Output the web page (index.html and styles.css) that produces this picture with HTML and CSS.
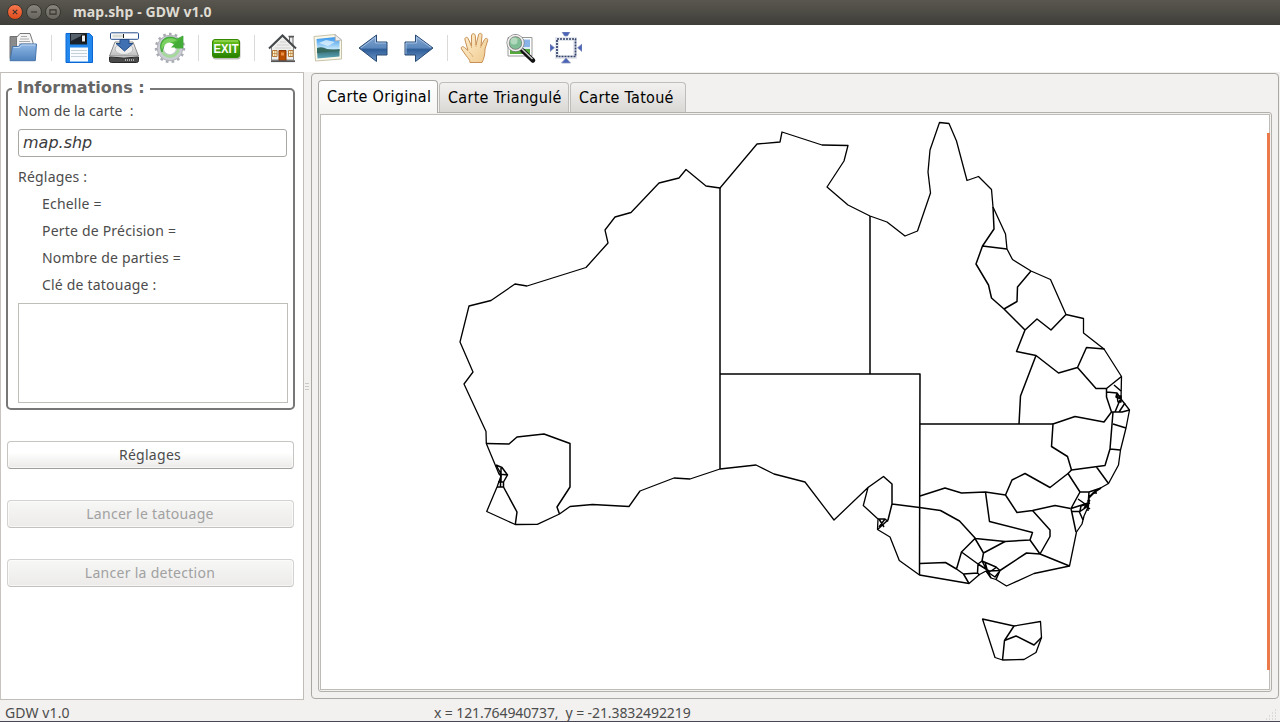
FILE: index.html
```html
<!DOCTYPE html>
<html lang="fr">
<head>
<meta charset="utf-8">
<title>map.shp - GDW v1.0</title>
<link rel="stylesheet" href="styles.css">
</head>
<body>
<svg class="defs" width="0" height="0" aria-hidden="true">
  <defs>
    <linearGradient id="blue" x1="0" y1="0" x2="0" y2="1"><stop offset="0" stop-color="#8fb8e6"/><stop offset="1" stop-color="#4f83bd"/></linearGradient>
    <linearGradient id="arrow" x1="0" y1="0" x2="0" y2="1"><stop offset="0" stop-color="#86a9d2"/><stop offset=".48" stop-color="#5c88bd"/><stop offset=".55" stop-color="#2f5d97"/><stop offset="1" stop-color="#6d98ca"/></linearGradient>
    <linearGradient id="green" x1="0" y1="0" x2="0" y2="1"><stop offset="0" stop-color="#6cc61e"/><stop offset="1" stop-color="#258000"/></linearGradient>
    <linearGradient id="metal" x1="0" y1="0" x2="0" y2="1"><stop offset="0" stop-color="#fafafa"/><stop offset="1" stop-color="#bcbcbc"/></linearGradient>
    <linearGradient id="skin" x1="0" y1="0" x2="1" y2="1"><stop offset="0" stop-color="#fff2d4"/><stop offset="1" stop-color="#efc98d"/></linearGradient>
    <linearGradient id="sky" x1="0" y1="0" x2="0" y2="1"><stop offset="0" stop-color="#3292ea"/><stop offset=".55" stop-color="#c3e6fa"/><stop offset=".6" stop-color="#356a70"/><stop offset="1" stop-color="#5ba7bb"/></linearGradient>
  </defs>
</svg>
<div class="window">
  <header class="titlebar">
    <span class="win-btn close"><svg viewBox="0 0 16 16"><path d="M5.500 5.500l5 5m0-5l-5 5"/></svg></span>
    <span class="win-btn"><svg viewBox="0 0 16 16"><path d="M4.500 8h7"/></svg></span>
    <span class="win-btn"><svg viewBox="0 0 16 16"><path d="M4.500 5.500h7v5h-7z"/></svg></span>
    <h1 class="title">map.shp - GDW v1.0</h1>
  </header>

  <nav class="toolbar">
    <span class="tool"><svg viewBox="0 0 32 32">
      <path d="M3 4.500h9l3 2v20H3z" fill="#8b8b8b" stroke="#707070"/>
      <path d="M9.500 5.500L13 1.500h10l3 9v6H9.500z" fill="#f5f5f5" stroke="#777"/>
      <path d="M14 4.500h6M13 7h9M12 9.500h11M12 12h12" stroke="#aaa"/>
      <path d="M5.500 14.500h6l2-2.500h16l-1.200 16.700H3z" fill="url(#blue)" stroke="#4674aa" stroke-linejoin="round"/>
      <path d="M6.500 15.500h6l2-2.500h14" stroke="#bdd7f2" fill="none"/></svg></span>
    <span class="sep"></span>
    <span class="tool"><svg viewBox="0 0 32 32">
      <path d="M3 1.500h23.500l3 3v26H3z" fill="#2288ed" stroke="#0b66d5"/>
      <path d="M7 1h17v11.500H7z" fill="#1b2229"/><path d="M8 2h14L8 9z" fill="#56616b"/>
      <path d="M18.500 3h4v7h-4z" fill="#eee" stroke="#111"/>
      <path d="M7 15.500h18v14H7z" fill="#f8fbff"/><path d="M8 18.500h16M8 21.500h16M8 24.500h16" stroke="#c6d0d8"/></svg></span>
    <span class="tool"><svg viewBox="0 0 32 32">
      <path d="M7 10h18l5.500 14H1.500z" fill="url(#metal)" stroke="#8a8a8a"/>
      <ellipse cx="16" cy="17" rx="9" ry="5.500" fill="#eee" stroke="#bbb"/>
      <path d="M1.500 25q14.500 2 29 0v3.500q0 2-2 2h-25q-2 0-2-2z" fill="#4a4a4a" stroke="#282828"/>
      <path d="M17 28h9" stroke="#aaa" stroke-width="2" stroke-dasharray="1 1"/>
      <rect x="2.500" y=".8" width="28" height="6.500" rx="1" fill="#fff" stroke="#274e8b"/><path d="M4.500 2.500h11v3h-11z" fill="#d8dcd4"/><path d="M15.500 2v4" stroke="#222"/>
      <path d="M12 7.500h9v4h4L16.500 19 8 11.500h4z" fill="#3f70b1" stroke="#244d87"/></svg></span>
    <span class="tool"><svg viewBox="0 0 32 32">
      <circle cx="16" cy="16" r="13.800" fill="none" stroke="#a9abb3" stroke-width="2.800" stroke-dasharray="2.600 3.180"/>
      <circle cx="16" cy="16" r="9.500" fill="none" stroke="#cbccd4" stroke-width="7"/>
      <circle cx="16" cy="16" r="12.800" fill="none" stroke="#a5a6ae" stroke-width=".7"/>
      <circle cx="16" cy="16" r="8.500" fill="none" stroke="#a5d89c" stroke-width="3"/>
      <path d="M8 20C3 10 12 1 23 7l6-3v12H18l3-3c-6-3-12 0-13 7z" fill="#50b83c" stroke="#2d982b" stroke-width=".7"/>
      <path d="M8 18C5 9 14 3 23 8l-4 2c-5 0-9 2-11 8z" fill="#8edb74" opacity=".7"/>
      <circle cx="15.500" cy="16" r="5.500" fill="#fff"/><path d="M17 15.500l4-4L28.500 5v10.500z" fill="#43ab38"/></svg></span>
    <span class="sep"></span>
    <span class="tool"><svg viewBox="0 0 32 32">
      <rect x="2.500" y="8" width="28" height="19.500" rx="3" fill="#777" opacity=".5"/>
      <rect x="2.500" y="7.500" width="27" height="18" rx="2.500" fill="url(#green)" stroke="#348900"/>
      <path d="M4 9h24" stroke="#a7df70"/>
      <text class="exit" x="16" y="21" text-anchor="middle" textLength="25" lengthAdjust="spacingAndGlyphs">EXIT</text></svg></span>
    <span class="sep"></span>
    <span class="tool"><svg viewBox="0 0 32 32">
      <path d="M23.500 5H27v10h-3.500z" fill="#eee" stroke="#666"/><path d="M22.500 4.500H28" stroke="#555" stroke-width="1.500"/>
      <path d="M5.500 15L16.500 4l11 11v13h-22z" fill="#eeeeec" stroke="#8a8a88"/>
      <path d="M9 16h16M11 13h12M14 10h6M7 19h20M7 22h20" stroke="#d1d1cf"/>
      <path d="M3 16.500L16.500 3.500l13.500 13" fill="none" stroke="#45494b" stroke-width="2"/>
      <path d="M13 18.500h7V29h-7z" fill="#b84f00" stroke="#8b3500"/><path d="M15 20.500h3v3h-3z" fill="#eb9147"/>
      <path d="M6.500 18.500h4.500v6H6.500zm16 0H27v6h-4.500z" fill="#fff7cf" stroke="#b57838"/><path d="M6.500 21.500H11M8.800 18.500v6M22.500 21.500H27M24.800 18.500v6" stroke="#b57838" stroke-width=".7"/>
      <path d="M5 29.200h24" stroke="#555" stroke-width="1.800"/></svg></span>
    <span class="tool"><svg viewBox="0 0 32 32">
      <path d="M2 4.500L23 2.500l6.500 5.500v19L3.500 29z" fill="#faf8e9" stroke="#c6c2aa"/>
      <path d="M4.500 7L24 5l3.500 4v15.500L5.500 26.500z" fill="url(#sky)"/>
      <path d="M5 16q5-2 10 1 7 2 12.500 0v2L5 21z" fill="#356a60"/><path d="M7 11l7-3 9 2-7 4z" fill="#e4f4ff" opacity=".75"/>
      <path d="M23 2.500l6.500 5.500-6 1z" fill="#eee" stroke="#b9b9b9"/></svg></span>
    <span class="tool"><svg viewBox="0 0 32 32"><path d="M2 16L19.500 3v7H30v13H19.500v6.500z" fill="url(#arrow)" stroke="#284a75" stroke-linejoin="round"/><path d="M4 16L18.500 5.200V11H29" fill="none" stroke="#b0cae8" stroke-width=".8"/></svg></span>
    <span class="tool"><svg viewBox="0 0 32 32"><path d="M30 16L12.500 3v7H2v13h10.500v6.500z" fill="url(#arrow)" stroke="#284a75" stroke-linejoin="round"/><path d="M28 15.500L13.500 5.200V11H3v11" fill="none" stroke="#b0cae8" stroke-width=".8"/></svg></span>
    <span class="sep"></span>
    <span class="tool"><svg viewBox="0 0 32 32">
      <path d="M11 30.500c0-3-2-4-4-7L2.500 17c-1-2.500 1.500-3 3-1.500l3.500 3L6 8c-.7-3 2.600-3.500 3.400-1l3 7L12.500 4c0-3 3.500-3 3.800-.3L17 13l2.500-10c.5-2.500 3.800-2 3.500.5L22 14l3.500-6.500c1.300-2.200 4-1 3 1.500L26 17C26 22 25 27 23 30.500z" fill="url(#skin)" stroke="#c78f54" stroke-linejoin="round"/>
      <path d="M12.500 14v2m4.500-3v2m5-1l-.5 2M10 20q3 2 4 5" fill="none" stroke="#dcb07a"/></svg></span>
    <span class="tool"><svg viewBox="0 0 32 32">
      <path d="M3 5.500h24v18.500H3z" fill="#fff" stroke="#999"/><path d="M5 7.500h20v14.500H5z" fill="#8ab4e7"/><path d="M5 17h20v5H5z" fill="#53a93b"/><path d="M17 15h8v2h-8z" fill="#dcebf4"/>
      <path d="M17.500 18.500L28 28.500" stroke="#111" stroke-width="4.500" stroke-linecap="round"/><path d="M16 16l11.500 11" stroke="#ccc" stroke-width="1.500"/>
      <circle cx="10.500" cy="11" r="7.500" fill="#7dbe86" fill-opacity=".85" stroke="#777" stroke-width="3"/><circle cx="10.500" cy="11" r="7.500" fill="none" stroke="#f0f0f0" stroke-width="1.700"/><circle cx="9" cy="9" r="3.500" fill="#d1ead8" opacity=".6"/></svg></span>
    <span class="tool"><svg viewBox="0 0 32 32">
      <path d="M7 7h18v18H7z" fill="#fff" stroke="#e5e7ef" stroke-width="4"/>
      <path d="M7 7h18.500v17.500H7z" fill="none" stroke="#334067" stroke-width="1.700" stroke-dasharray="2 1"/>
      <path d="M12 0h8l-2.500 4h-3zM16 26l4.500 5h-9zM0 12v7.500l4.500-3.700zM32 12v7.500l-4.500-3.700z" fill="#4b64b8" stroke="#8792b8" stroke-width=".7"/></svg></span>
  </nav>

  <main class="workspace">
    <aside class="side">
      <fieldset class="info">
        <legend>Informations :</legend>
        <label class="label name-label">Nom de la carte&nbsp; :</label>
        <div class="name-field">map.shp</div>
        <p class="label settings-label">Réglages :</p>
        <ul class="settings">
          <li>Echelle =</li>
          <li>Perte de Précision =</li>
          <li>Nombre de parties =</li>
          <li>Clé de tatouage :</li>
        </ul>
        <div class="key-box"></div>
      </fieldset>
      <div class="actions">
        <button class="btn">Réglages</button>
        <button class="btn" disabled>Lancer le tatouage</button>
        <button class="btn" disabled>Lancer la detection</button>
      </div>
    </aside>
    <div class="splitter"><i></i><i></i><i></i></div>
    <section class="viewer">
      <div class="tabs">
        <span class="tab active">Carte Original</span>
        <span class="tab second">Carte Triangulé</span>
        <span class="tab third">Carte Tatoué</span>
      </div>
      <div class="pane">
        <div class="canvas">
          <svg class="map" viewBox="321 115 948 574">
            <g class="coast">
              <path d="M720 188L706 186 686 169.500 679 178 659 183 631 212.500 615 217 605 230 608 243 586 267.500 527 286 515 284 491 300.500 469 306 460 342 473 372 464 384 486 431.500 486.300 443.500 499 474 501 476 497 487 486.700 511.500 515.300 524.500 537.300 524.300 559.500 514 570 506.500 592.500 504.500 629 506.500 640 491 674 478 690 479 720 469 756 465 774 474 805 482 834 520 868 487.500 863.300 505.500 878 519 877.500 529.500 890 537 899.300 560.500 919.500 575 969 583.500 979.500 574.500 986 571 991 578 996 579.500 1006.500 586 1034 573.500 1069.500 566 1076.500 532 1082 524 1084 516 1088.500 506 1089 498 1097 490 1108.500 483.500 1118.500 465 1120.500 450 1126 428 1129.500 410 1121 399 1121.500 376.500 1104 349 1083.500 333 1083.500 318.500 1066 314.500 1050.500 279.500 1031 271 1012.500 259.500 1007 249 1005.500 234 993 207 991.500 189.500 978.500 176.500 967 180.500 956.500 141 949 123.500 939.500 122.500 930 150 928 172 930.500 193 917.500 231 905 236 887 222 870 216 848 205 827 187 844 161 848 145.500 822 145 782 132 780 142 757 144z"/>
              <path d="M982.500 619L1014 626 1040.500 621.500 1041.500 637.500 1036 652.500 1024 659.500 1002.500 660 995 657.500z"/>
            </g>
            <g class="borders">
              <path d="M720 188V469M870 216V374M720 374H920L919.500 575M920 424H1053"/>
              <path d="M486.300 443.500L509 444 517 437 544 434 570 443.500V487L557 507 559.500 514M496 465L502 467.500 507.500 475 503.500 482V487L517 512 515.300 524.500M496 465L501 474 500.500 482V487H497M501 468V482M499 474L507.500 475M498 482H504M497 487H504"/>
              <path d="M868 487.500L883.500 476.500 892 484V504L888 520 877.500 529.500M892 504L919.500 507.500 940.500 510.500 959.500 521 975.500 538.500 1005 541.500 1030 540 1032.500 532.500 989.500 521.500 985.500 492M878 519H885L888 521.500M879 519L884 527M885 519L879 527"/>
              <path d="M920 496L945 488 961.500 493 985.500 492 1005.500 495 1012 480 1025 473.500 1050 487.500 1068 473.500M1005.500 495L1017 512.500 1032.500 510.500 1055 505.500 1070.500 508.500M1032.500 510.500L1050 530V536.500L1040 554 1030 540M1069.500 566L1040 554 1026.500 553 1000 570.500 996 579.500"/>
              <path d="M920 563.500L945.500 562.500 956.500 569 963.500 574 969 583.500M956.500 569L961.500 552 975 538.500 983.500 553 1005 541.500M961.500 552L978 564 982 561 983.500 553M963.500 574L977.500 573 978 564 989 571 1000 570.500M977.500 573L979.500 575M982 561L996 567 1000 570.500M982 561L991 578M985 562L988 573 997 567M986 571L995 577 999 572"/>
              <path d="M993 207L994 229 982.500 246 1007 249M982.500 246L976 264 988.500 285 991.500 298 1004 309 1025 330 1037 319 1051 330 1066 314.500M1004 309L1017 301.500 1017.500 287 1031 271M1025 330L1016.500 351.500 1036 355.500 1058.500 373 1077.500 367.500 1086.500 347.500 1104.500 349M1036 355.500L1020.500 396 1019 424M1077.500 367.500L1096 388.500H1106.500L1121.500 376.500"/>
              <path d="M1106.500 388.500V397L1111.500 412 1104 422 1075 416.500 1053 424 1051.500 446.500 1067.500 456.500 1071.500 470 1105 465.500 1110 449 1113 412M1106.500 392L1117 393 1121 399M1114 385L1121 391M1111.500 412H1122L1129.500 410M1120 400L1115 412M1125 403L1119 412M1113 424L1126 428M1110 449L1120.500 450M1096.500 467L1108.500 483.500M1117 393L1116 397 1121 399M1117 396H1121V402H1118z"/>
              <path d="M1071.500 470L1068 473.500 1080 492 1071 508.500 1076 532M1080 492H1089L1101 488M1089 492L1088 506 1078 499M1071 508.500L1088 503M1071 511.500H1080L1088 506M1079 511L1083 520M1089 497L1093 493 1101 488M1093 493L1097 493M1080 511L1081 506 1090 503M1084 504L1090 509M1084 508L1090 500M1088 500V511"/>
              <path d="M1014 626L1004.500 640.500 1002.500 660M1004.500 640.500L1016 636 1034 645 1041.500 637.500"/>
            </g>
          </svg>
          <span class="scroll-mark"></span>
        </div>
      </div>
    </section>
  </main>

  <footer class="status">
    <span class="app">GDW v1.0</span>
    <span class="coords">x = 121.764940737,&nbsp; y = -21.3832492219</span>
    <svg class="grip" viewBox="0 0 12 12"><path d="M10 1h1M7 4h1m2 0h1M4 7h1m2 0h1m2 0h1M1 10h1m2 0h1m2 0h1m2 0h1"/></svg>
  </footer>
</div>
</body>
</html>
```

FILE: styles.css
```css
* { box-sizing: border-box; }
body { margin: 0; background: #f2f1f0; color: #4c4c4c; font: 14px/20px "Noto Sans", "Open Sans", sans-serif; overflow: hidden; }
.defs { position: absolute; }
.window { display: flex; flex-direction: column; width: 1280px; height: 722px; border-bottom: 1px solid #484656; }

.titlebar { flex: none; display: flex; align-items: center; height: 25px; padding: 0 0 1px 7px; gap: 3px; background: linear-gradient(#59574f, #3f3e39); }
.win-btn { width: 16px; height: 16px; border-radius: 50%; background: linear-gradient(#87857d, #66645d); border: 1px solid #37362f; }
.win-btn svg { display: block; width: 14px; height: 14px; fill: none; stroke: #35342f; stroke-width: 1.3; }
.win-btn.close { background: linear-gradient(#f7784f, #df4b1c); }
.title { margin: 0 0 0 9px; color: #dfdbd2; font: bold 14px/20px "Noto Sans", sans-serif; letter-spacing: .1px; }

.toolbar { flex: none; display: flex; align-items: center; height: 47px; padding-bottom: 1px; background: #fff; }
.tool { flex: none; display: flex; justify-content: center; width: 45.5px; }
.tool svg { width: 32px; height: 32px; }
.sep { flex: none; width: 10.7px; height: 26px; background: linear-gradient(#dcdad8, #dcdad8) 5px 0 / 1px 100% no-repeat; }
.exit { fill: #fff; font: bold 12px "Liberation Sans", sans-serif; }

.workspace { flex: none; display: flex; height: 628px; }
.side { flex: none; width: 304px; height: 628px; padding: 7px 8px 0 6px; background: #fff; border: 1px solid #c0bdb8; border-left-color: #c8c4bf; }
.info { margin: 0 0 0 -1px; width: 289px; height: 330px; padding: 0 5px 0 10px; border: 2px solid #777; border-radius: 5px; }
.info legend { padding: 0 5px; margin-left: -6px; height: 17px; color: #666; font: bold 16px/15px "DejaVu Sans", sans-serif; white-space: pre; }
.label { display: block; margin: 0; height: 20px; white-space: nowrap; }
.name-label { margin-top: 4px; }
.name-field { height: 28px; margin: 8px 1px 0 0; padding: 0 4px; border: 1px solid #aaa8a3; border-radius: 3px; color: #3c3c3c; font: italic 16px/26px "DejaVu Sans", sans-serif; }
.settings-label { margin-top: 10px; letter-spacing: .2px; }
.settings { list-style: none; margin: 3px 0 0 24px; padding: 0; }
.settings li { height: 27px; line-height: 27px; white-space: nowrap; letter-spacing: .2px; }
.key-box { height: 100px; margin-top: 5px; border: 1px solid #bfbeb9; }
.actions { display: flex; flex-direction: column; gap: 31px; margin-top: 31px; }
.btn { height: 28px; width: 287px; padding: 0 1px 0 0; border: 1px solid #c7c5c1; border-bottom-color: #a09f9c; border-radius: 4px; background: linear-gradient(#fff 40%, #ebeae8); color: #4c4c4c; font: inherit; letter-spacing: .28px; box-shadow: inset 0 0 0 1px rgba(255,255,255,.6); }
.btn:disabled { background: linear-gradient(#f7f7f6, #ecebea); border-color: #d4d2d0; border-bottom-color: #c3c1be; color: #a1a1a1; }

.splitter { flex: none; width: 7px; padding-right: 2px; display: flex; flex-direction: column; align-items: center; justify-content: center; gap: 2px; }
.splitter i { width: 4px; height: 1px; background: #cbc9c5; }
.viewer { flex: 1; display: flex; flex-direction: column; height: 626px; margin: 1px 1px 0 0; padding: 6px; border: 1px solid #aaa8a3; border-radius: 4px; }
.tabs { display: flex; align-items: flex-end; height: 32px; }
.tab { height: 30px; padding-left: 8px; border: 1px solid #bfbdb9; border-bottom: 0; border-radius: 4px 4px 0 0; background: linear-gradient(#f2f1f0, #d9d8d5); color: #000; font: 16px/30px "DejaVu Sans Condensed", "DejaVu Sans", sans-serif; font-stretch: condensed; letter-spacing: .29px; white-space: nowrap; }
.tab.active { position: relative; width: 120px; height: 33px; margin-bottom: -1px; background: linear-gradient(#fff, #f5f5f4); line-height: 32px; border-color: #aaa8a3; }
.tab.second { width: 130px; margin-left: 1px; }
.tab.third { width: 116px; margin-left: 1px; }
.pane { flex: 1; padding: 1px; border: 1px solid #b2b0ab; border-radius: 0 3px 3px 3px; }
.canvas { position: relative; width: 100%; height: 100%; border: 1px solid #bebcb6; background: #fff; }
.map { display: block; width: 948px; height: 574px; fill: none; stroke: #000; stroke-linejoin: round; }
.coast { stroke-width: 1.3; }
.borders { stroke-width: 1.5; }
.scroll-mark { position: absolute; right: -1px; top: 18px; width: 3px; height: 537px; background: #eb7949; }

.status { flex: 1; display: flex; align-items: center; padding: 3px 7px 0 5px; }
.app { width: 429px; letter-spacing: .1px; }
.coords { flex: 1; letter-spacing: -.1px; white-space: nowrap; }
.grip { width: 12px; height: 12px; margin: 4px -4px 0 0; stroke: #c6c4c0; }
```
